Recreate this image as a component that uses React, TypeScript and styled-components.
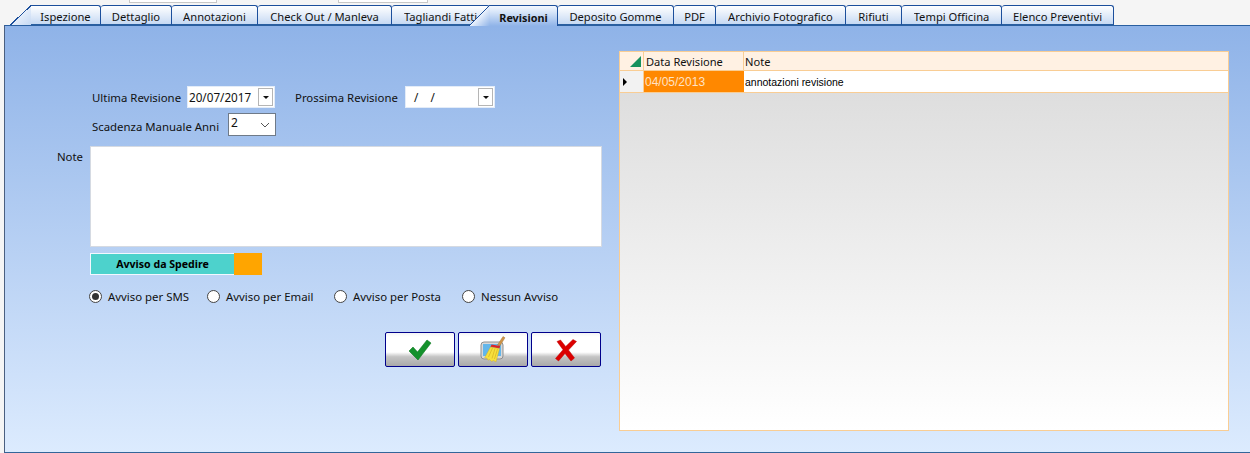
import React from 'react'
import styled, { createGlobalStyle } from 'styled-components'

const GlobalStyle = createGlobalStyle`
  html, body {
    margin: 0;
    padding: 0;
    height: 100%;
    overflow: hidden;
    background: #f5f5f5;
  }
  * {
    box-sizing: border-box;
  }
`

const Screen = styled.div`
  width: 1250px;
  height: 453px;
  font-family: 'Noto Sans', 'Open Sans', sans-serif;
  font-size: 11.4px;
  color: #111;
  display: flex;
  flex-direction: column;
`

const TopStrip = styled.div`
  height: 5px;
  display: flex;
  align-items: flex-start;
`

const ClippedField = styled.div<{ $left: number; $width: number }>`
  margin-left: ${(p) => p.$left}px;
  width: ${(p) => p.$width}px;
  height: 3px;
  background: #fff;
  border: 1px solid #c8c8c8;
  border-top: none;
`

const TabBar = styled.div`
  height: 20px;
  display: flex;
  padding-left: 31px;
  position: relative;
  z-index: 1;
`

const Tab = styled.div<{ $width: number; $active?: boolean; $slant?: boolean; $indent?: number }>`
  position: relative;
  width: ${(p) => p.$width}px;
  height: ${(p) => (p.$active ? 21 : 20)}px;
  display: flex;
  align-items: center;
  justify-content: ${(p) => (p.$indent ? 'flex-start' : 'center')};
  padding: 2px 0 0 ${(p) => p.$indent ?? 0}px;
  white-space: nowrap;
  font-weight: ${(p) => (p.$active ? 700 : 400)};
  font-size: ${(p) => (p.$active ? 10.8 : 11.2)}px;
  background: ${(p) =>
    p.$active ? 'linear-gradient(#f4f8fe, #d8e6f9 30%, #8fb3e8)' : 'linear-gradient(#ffffff, #c6d9f3)'};
  border-top: 1px solid #1c4f9c;
  border-right: 1.5px solid #1c4f9c;
  border-top-right-radius: 3px;
  border-top-left-radius: ${(p) => (p.$slant ? 0 : 3)}px;
  border-bottom: ${(p) => (p.$active ? 'none' : '1px solid #2a5fa0')};

  ${(p) =>
    p.$slant &&
    `
    &::before {
      content: '';
      position: absolute;
      top: -1px;
      left: -21px;
      width: 21px;
      height: ${p.$active ? 21 : 20}px;
      background: ${
        p.$active
          ? 'linear-gradient(to bottom right, transparent 49%, #1c4f9c 49%, #1c4f9c 52%, #eaf1fc 52%, #8fb3e8)'
          : 'linear-gradient(to bottom right, transparent 49%, #1c4f9c 49%, #1c4f9c 53%, #e4edfa 53%, #c6d9f3)'
      };
    }
  `}
`

const TabText = styled.span<{ $clip?: number }>`
  display: block;
  overflow: hidden;
  max-width: ${(p) => (p.$clip ? `${p.$clip}px` : 'none')};
`

const Panel = styled.div`
  flex: 1;
  margin-left: 4px;
  display: flex;
  background: linear-gradient(#8fb3e8, #dcebfe);
  border-top: 1px solid #2a5fa0;
  border-left: 1px solid #4a5f80;
  border-bottom: 1px solid #336699;
  min-height: 0;
`

const FormColumn = styled.div`
  width: 614px;
  padding-top: 60px;
  display: flex;
  flex-direction: column;
`

const FieldRow = styled.div`
  height: 22px;
  display: flex;
  align-items: center;
  padding-left: 87px;
`

const ScadenzaRow = styled(FieldRow)`
  height: 23px;
  margin-top: 5px;
`

const Label = styled.span<{ $width: number; $drop?: number }>`
  width: ${(p) => p.$width}px;
  padding-top: ${(p) => p.$drop ?? 0}px;
  white-space: nowrap;
`

const DateField = styled.div<{ $width: number; $after?: number }>`
  width: ${(p) => p.$width}px;
  height: 22px;
  margin-right: ${(p) => p.$after ?? 0}px;
  background: #fff;
  border: 1px solid #e3ecf8;
  display: flex;
  align-items: center;
  justify-content: space-between;
  padding: 0 1px;
  font-size: 11.7px;
`

const DateValue = styled.span<{ $indent: number }>`
  padding-left: ${(p) => p.$indent}px;
  white-space: pre;
`

const DropButton = styled.span`
  width: 15px;
  height: 18px;
  background: #fff;
  border: 1px solid #b5b5b5;
  display: flex;
  align-items: center;
  justify-content: center;

  &::after {
    content: '';
    border-left: 3px solid transparent;
    border-right: 3px solid transparent;
    border-top: 3px solid #111;
  }
`

const ComboField = styled.div`
  width: 48px;
  height: 23px;
  background: #fff;
  border: 1px solid #6f7a88;
  display: flex;
  align-items: center;
  justify-content: space-between;
  padding: 0 5px 0 2px;
`

const ComboValue = styled.span`
  padding-bottom: 5px;
  font-size: 12px;
`

const NoteRow = styled.div`
  margin-top: 10px;
  display: flex;
`

const NoteLabel = styled.span`
  width: 85px;
  padding: 3px 7px 0 0;
  text-align: right;
`

const NoteArea = styled.textarea`
  width: 512px;
  height: 101px;
  background: #fff;
  border: 1px solid #d5dae2;
  resize: none;
  outline: none;
  display: block;
`

const NoticeRow = styled.div`
  margin: 6px 0 0 85px;
  width: 172px;
  height: 22px;
  display: flex;
`

const NoticeLabel = styled.div`
  flex: 1;
  background: #4dd2cc;
  border: 1px solid #f3f8ff;
  border-right: none;
  display: flex;
  align-items: center;
  justify-content: center;
  font-size: 10.6px;
  font-weight: 700;
  color: #000;
`

const NoticeSwatch = styled.div`
  width: 28px;
  background: #ffa500;
`

const RadioRow = styled.div`
  margin: 14px 0 0 84px;
  display: flex;
  height: 15px;
  align-items: center;
`

const RadioItem = styled.div<{ $width: number }>`
  width: ${(p) => p.$width}px;
  display: flex;
  align-items: center;
  gap: 6px;
  white-space: nowrap;
`

const RadioDot = styled.span<{ $on?: boolean }>`
  width: 13px;
  height: 13px;
  border-radius: 50%;
  border: 1px solid #444;
  background: #fff;
  display: flex;
  align-items: center;
  justify-content: center;

  &::after {
    content: '';
    width: 7px;
    height: 7px;
    border-radius: 50%;
    background: ${(p) => (p.$on ? '#333' : 'transparent')};
  }
`

const ActionRow = styled.div`
  margin: 28px 0 0 380px;
  display: flex;
  gap: 3px;
`

const ActionButton = styled.div`
  width: 70px;
  height: 35px;
  border: 1px solid #00008b;
  border-radius: 2px;
  background: linear-gradient(#f4f4f4 0, #ffffff 12%, #ffffff 58%, #c4c4c4 72%, #a9a9a9 100%);
  display: flex;
  align-items: center;
  justify-content: center;
`

const GridBox = styled.div`
  width: 610px;
  height: 380px;
  margin-top: 25px;
  border: 1px solid #f9cd94;
  background: linear-gradient(#dadada, #ffffff);
  display: flex;
  flex-direction: column;
`

const GridRow = styled.div<{ $height: number; $head?: boolean }>`
  height: ${(p) => p.$height}px;
  display: flex;
  background: ${(p) => (p.$head ? '#fff1e3' : '#fff')};
  border-bottom: 1px solid #f9cd94;
`

const Corner = styled.div`
  width: 24px;
  border-right: 1px solid #f9cd94;
  display: flex;
  align-items: flex-end;
  justify-content: flex-end;
  padding: 0 2px 3px 0;
`

const RowMarker = styled.div`
  width: 24px;
  background: #f2f2f2;
  border-right: 1px solid #f9cd94;
  display: flex;
  align-items: center;
  padding-left: 3px;

  &::after {
    content: '';
    border-top: 4px solid transparent;
    border-bottom: 4px solid transparent;
    border-left: 4px solid #000;
  }
`

const HeadCell = styled.div<{ $width?: number }>`
  width: ${(p) => (p.$width ? `${p.$width}px` : 'auto')};
  flex: ${(p) => (p.$width ? 'none' : 1)};
  border-right: ${(p) => (p.$width ? '1px solid #f9cd94' : 'none')};
  padding-left: ${(p) => (p.$width ? 2 : 1)}px;
  display: flex;
  align-items: center;
  font-size: 11.1px;
`

const DateCell = styled.div`
  width: 100px;
  background: #ff8800;
  color: #ffe2c4;
  padding-left: 1px;
  display: flex;
  align-items: center;
  font-family: 'Liberation Sans', Arial, sans-serif;
  font-size: 12px;
`

const TextCell = styled.div`
  flex: 1;
  padding-left: 1px;
  display: flex;
  align-items: center;
  font-family: 'Liberation Sans', Arial, sans-serif;
  font-size: 10.5px;
  color: #000;
`

const tabs = [
  { label: 'Ispezione', width: 70 },
  { label: 'Dettaglio', width: 71 },
  { label: 'Annotazioni', width: 86 },
  { label: 'Check Out / Manleva', width: 134 },
  { label: 'Tagliandi Fatti', width: 98, indent: 12, clip: 75 },
  { label: 'Revisioni', width: 68, active: true },
  { label: 'Deposito Gomme', width: 116 },
  { label: 'PDF', width: 42 },
  { label: 'Archivio Fotografico', width: 130 },
  { label: 'Rifiuti', width: 56 },
  { label: 'Tempi Officina', width: 100 },
  { label: 'Elenco Preventivi', width: 112 },
]

const radios = [
  { label: 'Avviso per SMS', width: 118, on: true },
  { label: 'Avviso per Email', width: 127 },
  { label: 'Avviso per Posta', width: 128 },
  { label: 'Nessun Avviso', width: 110 },
]

function CheckIcon() {
  return (
    <svg width="24" height="22" viewBox="0 0 24 22">
      <path d="M1 12l4-4 4.5 5L19 1l4 3-13 17z" fill="#14912c" stroke="#0d7a22" strokeWidth="0.6" />
    </svg>
  )
}

function CrossIcon() {
  return (
    <svg width="24" height="24" viewBox="0 0 24 24">
      <path
        d="M3 3.5l3.5-1.5 5.2 6.5L19 1.5l3.5 2-8 8.5 6 8-3.5 3-6-7.5L4.5 23 1.5 20.5l7.5-8.8z"
        fill="#dc0000"
        stroke="#bb0000"
        strokeWidth="0.5"
      />
    </svg>
  )
}

function BroomIcon() {
  return (
    <svg width="26" height="27" viewBox="0 0 26 27">
      <rect x="1" y="6" width="22" height="17" rx="3" fill="#d8d8d8" stroke="#8f8f8f" strokeWidth="1" />
      <rect x="3" y="8" width="18" height="12" fill="#63b6ea" />
      <path d="M17.5 9L23 0.5 25 1.8 19.8 10z" fill="#cf9448" stroke="#9a6a28" strokeWidth="0.4" />
      <path d="M11.5 8.4l8.6 1.6-.6 2.6-9-1.6z" fill="#d9262c" />
      <path
        d="M10.5 11l9 1.6L16 26l-2.6-1.6-1.6 1.2-2.2-2-1.6.6-1-2-2.4-.4z"
        fill="#f7e03c"
        stroke="#cda81e"
        strokeWidth="0.4"
      />
      <path d="M12.5 12l-4 9M15 12.5l-3 10M17.5 13l-3 10" stroke="#d9b020" strokeWidth="0.7" fill="none" />
    </svg>
  )
}

function SortMark() {
  return (
    <svg width="11" height="11" viewBox="0 0 11 11">
      <path d="M11 0v11H0z" fill="#17915c" />
    </svg>
  )
}

function Chevron() {
  return (
    <svg width="10" height="6" viewBox="0 0 10 6">
      <path d="M1 1l4 4 4-4" fill="none" stroke="#555" strokeWidth="1" />
    </svg>
  )
}

export default function App() {
  return (
    <Screen>
      <GlobalStyle />
      <TopStrip>
        <ClippedField $left={129} $width={88} />
        <ClippedField $left={121} $width={90} />
      </TopStrip>
      <TabBar>
        {tabs.map((t, i) => (
          <Tab key={t.label} $width={t.width} $active={t.active} $slant={i === 0 || t.active} $indent={t.indent}>
            <TabText $clip={t.clip}>{t.label}</TabText>
          </Tab>
        ))}
      </TabBar>
      <Panel>
        <FormColumn>
          <FieldRow>
            <Label $width={95}>Ultima Revisione</Label>
            <DateField $width={88} $after={20}>
              <DateValue $indent={0}>20/07/2017</DateValue>
              <DropButton />
            </DateField>
            <Label $width={110}>Prossima Revisione</Label>
            <DateField $width={90}>
              <DateValue $indent={4}>{' /    /'}</DateValue>
              <DropButton />
            </DateField>
          </FieldRow>
          <ScadenzaRow>
            <Label $width={136} $drop={4}>
              Scadenza Manuale Anni
            </Label>
            <ComboField>
              <ComboValue>2</ComboValue>
              <Chevron />
            </ComboField>
          </ScadenzaRow>
          <NoteRow>
            <NoteLabel>Note</NoteLabel>
            <NoteArea readOnly />
          </NoteRow>
          <NoticeRow>
            <NoticeLabel>Avviso da Spedire</NoticeLabel>
            <NoticeSwatch />
          </NoticeRow>
          <RadioRow>
            {radios.map((r) => (
              <RadioItem key={r.label} $width={r.width}>
                <RadioDot $on={r.on} />
                {r.label}
              </RadioItem>
            ))}
          </RadioRow>
          <ActionRow>
            <ActionButton>
              <CheckIcon />
            </ActionButton>
            <ActionButton>
              <BroomIcon />
            </ActionButton>
            <ActionButton>
              <CrossIcon />
            </ActionButton>
          </ActionRow>
        </FormColumn>
        <GridBox>
          <GridRow $height={19} $head>
            <Corner>
              <SortMark />
            </Corner>
            <HeadCell $width={100}>Data Revisione</HeadCell>
            <HeadCell>Note</HeadCell>
          </GridRow>
          <GridRow $height={22}>
            <RowMarker />
            <DateCell>04/05/2013</DateCell>
            <TextCell>annotazioni revisione</TextCell>
          </GridRow>
        </GridBox>
      </Panel>
    </Screen>
  )
}
